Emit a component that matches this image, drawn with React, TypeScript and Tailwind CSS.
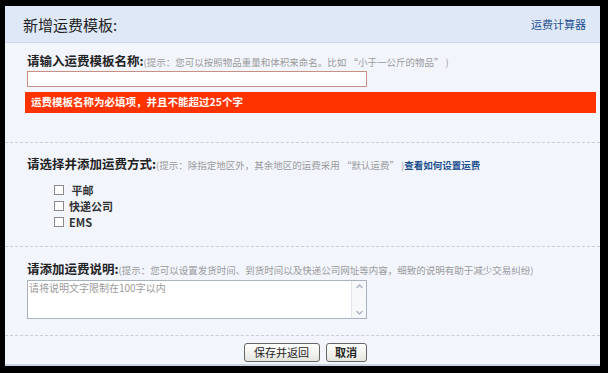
export default function App() {
  const cjk = { fontFamily: '"Noto Sans CJK SC", "Liberation Sans", sans-serif' }

  return (
    <div className="w-[608px] h-[373px] bg-black pt-[6px] pl-[5px] pr-[8px] pb-[7px]" style={cjk}>
      <div className="h-full bg-[#f2f5fc] border-b-2 border-[#c9d3e3] flex flex-col">
        {/* 标题栏 */}
        <div className="h-[37px] shrink-0 bg-[#dfe8f6] border-b border-[#cdd8ea] flex items-center justify-between pl-[18px] pr-[14px]">
          <h1 className="text-[15px] text-[#222] leading-none">新增运费模板:</h1>
          <a className="text-[11px] text-[#1c4f8f] leading-none">运费计算器</a>
        </div>

        {/* 模板名称 */}
        <div className="shrink-0 pl-[22px] pr-[4px] pt-[12px] h-[100px] border-b border-dashed border-[#c8cfdb]">
          <div className="flex items-baseline leading-none">
            <span className="text-[12.5px] font-bold text-[#222]">请输入运费模板名称:</span>
            <span className="text-[9.5px] text-[#9a9a9a]">(提示：您可以按照物品重量和体积来命名。比如 “小于一公斤的物品” )</span>
          </div>
          <div className="mt-[3px] w-[340px] h-[16px] bg-white border border-[#c98f80]" />
          <div className="mt-[5px] -ml-[2px] h-[21px] bg-[#ff3300] flex items-center pl-[6px]">
            <span className="text-[10.5px] font-bold text-white leading-none">运费模板名称为必填项，并且不能超过25个字</span>
          </div>
        </div>

        {/* 运费方式 */}
        <div className="shrink-0 pl-[22px] pt-[15px] h-[104px] border-b border-dashed border-[#c8cfdb]">
          <div className="flex items-baseline leading-none">
            <span className="text-[12.5px] font-bold text-[#222]">请选择并添加运费方式:</span>
            <span className="text-[9.5px] text-[#9a9a9a]">(提示：除指定地区外，其余地区的运费采用 “默认运费” )</span>
            <a className="text-[9.5px] font-bold text-[#1c4f8f]">查看如何设置运费</a>
          </div>
          <div className="mt-[14px] pl-[27px] flex flex-col gap-[5px]">
            {[' 平邮', '快递公司', 'EMS'].map(label => (
              <label key={label} className="flex items-center gap-[5px] leading-none">
                <span className="w-[10px] h-[10px] bg-white border border-[#8a8a8a]" />
                <span className="text-[11px] font-bold text-[#333] whitespace-pre">{label}</span>
              </label>
            ))}
          </div>
        </div>

        {/* 运费说明 */}
        <div className="shrink-0 pl-[22px] pt-[16px] h-[89px] border-b border-dashed border-[#c8cfdb]">
          <div className="flex items-baseline leading-none">
            <span className="text-[12.5px] font-bold text-[#222]">请添加运费说明:</span>
            <span className="text-[9.5px] text-[#9a9a9a]">(提示：您可以设置发货时间、到货时间以及快递公司网址等内容，细致的说明有助于减少交易纠纷)</span>
          </div>
          <div className="mt-[4px] w-[340px] h-[39px] bg-white border border-[#a9b2bf] flex">
            <div className="flex-1 pl-[1px] pt-[2px] text-[10px] text-[#9a9a9a] leading-none">请将说明文字限制在100字以内</div>
            <div className="w-[15px] border-l border-[#e2e6ec] bg-[#f7f8fa] flex flex-col justify-between items-center py-[2px]">
              <svg width="9" height="7" viewBox="0 0 9 7"><path d="M1.5 5 L4.5 2 L7.5 5" fill="none" stroke="#a8b4c4" strokeWidth="1.3" /></svg>
              <svg width="9" height="7" viewBox="0 0 9 7"><path d="M1.5 2 L4.5 5 L7.5 2" fill="none" stroke="#a8b4c4" strokeWidth="1.3" /></svg>
            </div>
          </div>
        </div>

        {/* 按钮 */}
        <div className="flex-1 flex items-start justify-center gap-[6px] pt-[7px] pl-[5px]">
          <button className="w-[76px] h-[19px] rounded-[3px] border border-[#666] bg-gradient-to-b from-white to-[#e6e6e0] text-[11px] text-[#222] leading-none">保存并返回</button>
          <button className="w-[41px] h-[19px] rounded-[3px] border border-[#666] bg-gradient-to-b from-white to-[#e6e6e0] text-[11px] font-bold text-[#222] leading-none">取消</button>
        </div>
      </div>
    </div>
  )
}
